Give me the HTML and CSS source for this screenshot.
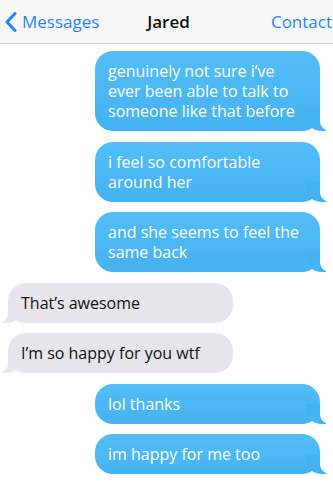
FILE: index.html
```html
<!DOCTYPE html>
<html lang="en">
  <head>
    <meta charset="UTF-8" />
    <meta name="viewport" content="width=device-width, initial-scale=1.0" />
    <link rel="stylesheet" href="styles.css">
    <title>Jared</title>
  </head>
  <body>
    <header class="topbar">
      <a class="back" href="#">
        <svg class="chevron" width="12" height="20" viewBox="0 0 12 20">
          <polyline points="10,1.5 2,10 10,18.5" fill="none" stroke="#1e86f6" stroke-width="3" stroke-linecap="round" stroke-linejoin="round" />
        </svg>
        Messages
      </a>
      <h1 class="name">Jared</h1>
      <a class="contact" href="#">Contact</a>
    </header>
    <main class="thread">
      <p class="msg sent">genuinely not sure i’ve ever been able to talk to someone like that before</p>
      <p class="msg sent">i feel so comfortable around her</p>
      <p class="msg sent">and she seems to feel the same back</p>
      <p class="msg received">That’s awesome</p>
      <p class="msg received">I’m so happy for you wtf</p>
      <p class="msg sent">lol thanks</p>
      <p class="msg sent">im happy for me too</p>
    </main>
  </body>
</html>
```

FILE: styles.css
```css
* {
  margin: 0;
  padding: 0;
  box-sizing: border-box;
}

body {
  font-family: "Open Sans", "Liberation Sans", sans-serif;
  background: #fff;
  color: #111;
  overflow: hidden;
}

/* HEADER */
.topbar {
  height: 44px;
  background: #f7f7f7;
  border-bottom: 1px solid #d6d6d6;
  display: grid;
  grid-template-columns: 1fr auto 1fr;
  align-items: center;
  padding: 0 1px 0 5px;
}

.back,
.contact {
  color: #1e86f6;
  text-decoration: none;
  font-size: 17px;
}

.back {
  display: flex;
  align-items: center;
  gap: 5px;
}

.chevron {
  display: block;
}

.contact {
  justify-self: end;
}

.name {
  font-size: 17px;
  font-weight: 600;
  color: #111;
}

/* THREAD */
.thread {
  display: flex;
  flex-direction: column;
  gap: 10.5px;
  padding: 7px 13px 0 8px;
}

.msg {
  position: relative;
  width: 225px;
  padding: 10px 13px;
  font-size: 16px;
  line-height: 20px;
  border-radius: 18px;
}

.sent {
  align-self: flex-end;
  color: #fff;
  background: linear-gradient(#52bdf6, #45b2f1);
}

.received {
  align-self: flex-start;
  background: #e6e5eb;
  color: #111;
}

/* bubble tails */
.msg::before,
.msg::after {
  content: "";
  position: absolute;
  bottom: 0;
  height: 20px;
}

.sent::before {
  right: -6px;
  width: 20px;
  background: #45b2f1;
  border-bottom-left-radius: 16px 14px;
}

.sent::after {
  right: -26px;
  width: 26px;
  background: #fff;
  border-bottom-left-radius: 10px;
}

.received::before {
  left: -6px;
  width: 20px;
  background: #e6e5eb;
  border-bottom-right-radius: 16px 14px;
}

.received::after {
  left: -26px;
  width: 26px;
  background: #fff;
  border-bottom-right-radius: 10px;
}
```
